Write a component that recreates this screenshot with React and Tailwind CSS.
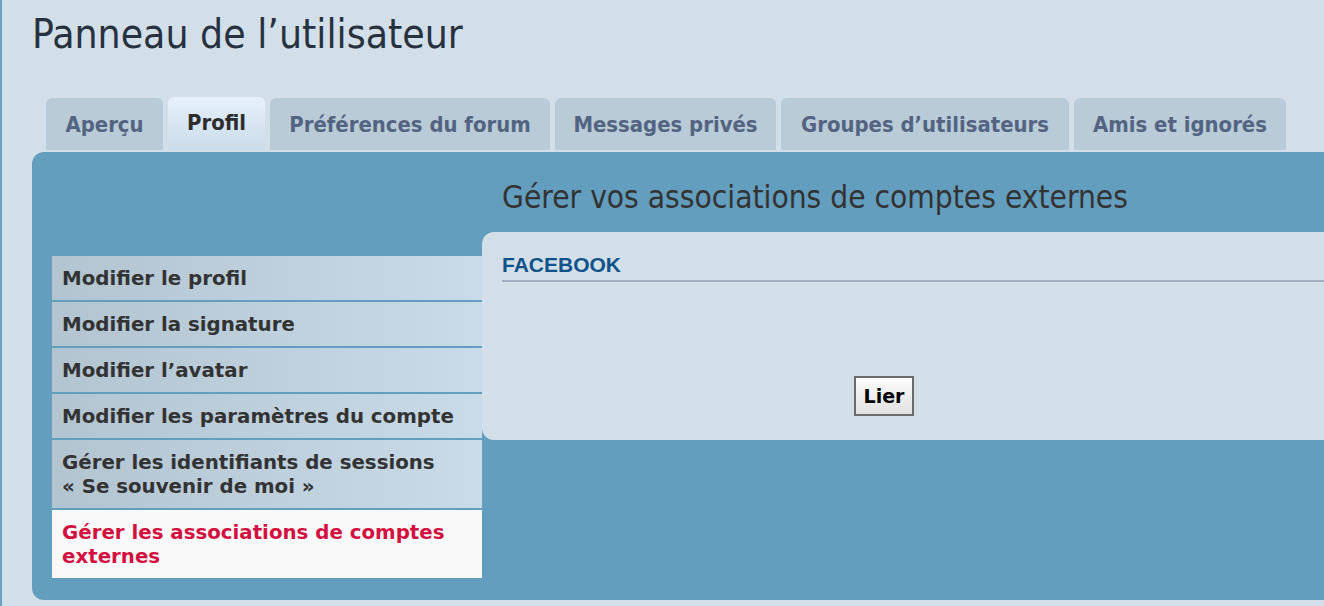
import React from 'react';

const TABS = [
  { label: 'Aperçu', w: 'w-[117px]' },
  { label: 'Profil', w: 'w-[97px]', active: true },
  { label: 'Préférences du forum', w: 'w-[280px]' },
  { label: 'Messages privés', w: 'w-[221px]' },
  { label: 'Groupes d’utilisateurs', w: 'w-[288px]' },
  { label: 'Amis et ignorés', w: 'w-[212px]' },
];

const MENU = [
  { lines: ['Modifier le profil'] },
  { lines: ['Modifier la signature'] },
  { lines: ['Modifier l’avatar'] },
  { lines: ['Modifier les paramètres du compte'] },
  { lines: ['Gérer les identifiants de sessions', '« Se souvenir de moi »'] },
  { lines: ['Gérer les associations de comptes', 'externes'], active: true },
];

const cond = "font-['DejaVu_Sans_Condensed','DejaVu_Sans',sans-serif] font-stretch-condensed";

export default function App() {
  return (
    <div className="w-[1324px] h-[606px] overflow-hidden bg-[#d2dfe8] border-l-2 border-[#6aa0c2]">
      <h1 className={`${cond} pl-[30px] mt-[10px] text-[40.5px] leading-[48px] text-[#28313f] font-normal`}>
        Panneau de l’utilisateur
      </h1>

      {/* tabs */}
      <div className="flex items-end gap-[5px] ml-[44px] mt-[40px] h-[52px]">
        {TABS.map((t) => (
          <div
            key={t.label}
            className={`${t.w} ${cond} h-[52px] rounded-t-[6px] flex justify-center font-bold text-[21.9px] whitespace-nowrap ${
              t.active
                ? 'bg-gradient-to-b from-[#e5f0fb] to-[#cbdcea] text-[#2d2d2d] pt-[13px] h-[53px]'
                : 'bg-[#b9cbd7] text-[#536482] pt-[14px]'
            }`}
          >
            <span className="leading-[26px]">{t.label}</span>
          </div>
        ))}
      </div>

      {/* panel */}
      <div className="mt-[2px] ml-[30px] w-[1340px] h-[448px] rounded-[12px] bg-[#639ebe] flex pl-[20px]">
        <div className="w-[430px] pt-[104px] flex flex-col gap-[2px]">
          {MENU.map((m, i) => (
            <div
              key={i}
              className={`pl-[10px] pt-[11px] pb-[9px] font-['DejaVu_Sans',sans-serif] font-bold text-[19.8px] leading-[24px] ${
                m.active
                  ? 'bg-[#f9f9f9] text-[#d31141]'
                  : 'bg-gradient-to-r from-[#b3c4d1] to-[#c9dbe8] text-[#333333]'
              }`}
            >
              {m.lines.map((l, j) => (
                <div key={j} className="whitespace-nowrap">{l}</div>
              ))}
            </div>
          ))}
        </div>

        <div className="flex-1">
          <h2 className={`${cond} h-[80px] pt-[25px] pl-[20px] text-[31.4px] leading-[40px] text-[#333333] font-normal whitespace-nowrap`}>
            Gérer vos associations de comptes externes
          </h2>
          <div className="h-[208px] rounded-l-[12px] bg-[#d2dfe8] pl-[20px] pt-[21px]">
            <h3 className="font-['Liberation_Sans',Arial,sans-serif] font-bold text-[21px] leading-[24px] text-[#105289] pb-[3px] border-b-2 border-[#a3afbf]">
              FACEBOOK
            </h3>
            <div className="mt-[94px] ml-[352px]">
              <button className="w-[60px] h-[40px] border-2 border-[#6b6b6b] bg-gradient-to-b from-[#fbfbfb] to-[#e2e2e2] font-['DejaVu_Sans',sans-serif] font-bold text-[19px] text-black flex items-center justify-center">
                Lier
              </button>
            </div>
          </div>
        </div>
      </div>
    </div>
  );
}
